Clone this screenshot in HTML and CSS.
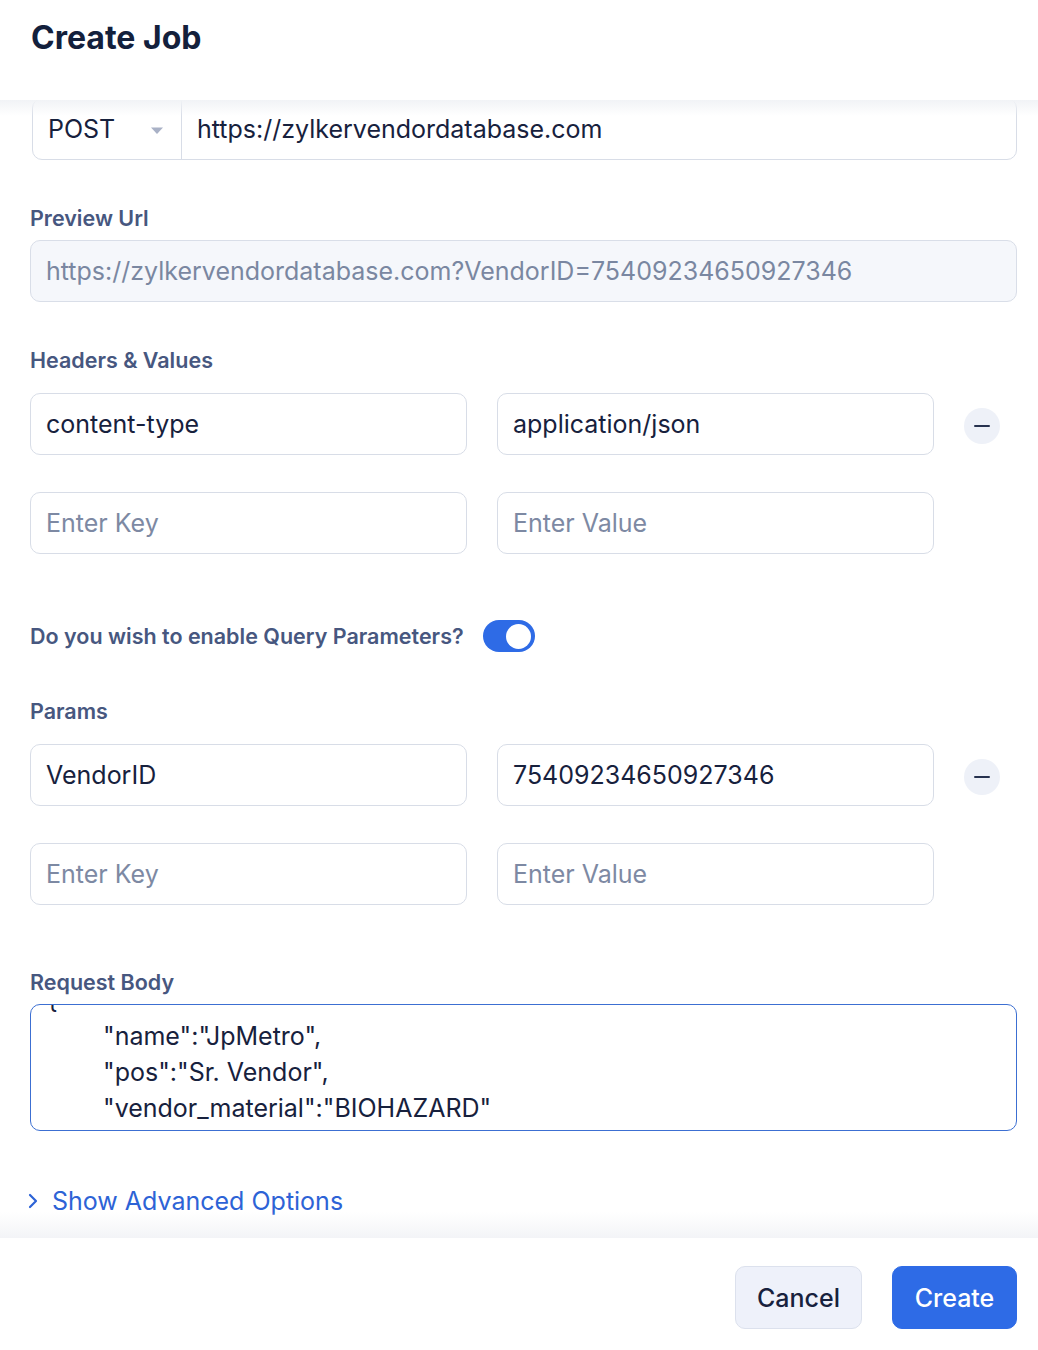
FILE: index.html
```html
<!DOCTYPE html>
<html lang="en">
<head>
<meta charset="utf-8">
<title>Create Job</title>
<link rel="stylesheet" href="styles.css">
</head>
<body>
<div class="modal">
  <header class="modal-head">
    <h1 class="title">Create Job</h1>
  </header>
  <main class="modal-body">
    <div class="scroll">
      <div class="url-row">
        <div class="method">
          <span>POST</span>
          <svg class="caret" width="14" height="9" viewBox="0 0 14 9"><path d="M1 1.5h12L7 8z" fill="#a9b1c6"/></svg>
        </div>
        <div class="url">https://zylkervendordatabase.com</div>
      </div>

      <div class="label l-preview">Preview Url</div>
      <div class="preview">https://zylkervendordatabase.com?VendorID=75409234650927346</div>

      <div class="label l-section">Headers &amp; Values</div>
      <div class="kv">
        <div class="field">content-type</div>
        <div class="field">application/json</div>
        <button class="remove" aria-label="Remove"><span></span></button>
      </div>
      <div class="kv kv-next">
        <div class="field ph">Enter Key</div>
        <div class="field ph">Enter Value</div>
        <div></div>
      </div>

      <div class="toggle-row">
        <span class="label">Do you wish to enable Query Parameters?</span>
        <span class="toggle"><span class="knob"></span></span>
      </div>

      <div class="label l-params">Params</div>
      <div class="kv">
        <div class="field">VendorID</div>
        <div class="field">75409234650927346</div>
        <button class="remove" aria-label="Remove"><span></span></button>
      </div>
      <div class="kv kv-next">
        <div class="field ph">Enter Key</div>
        <div class="field ph">Enter Value</div>
        <div></div>
      </div>

      <div class="label l-body">Request Body</div>
      <div class="textarea">
        <pre class="code">{
	"name":"JpMetro",
	"pos":"Sr. Vendor",
	"vendor_material":"BIOHAZARD"
}</pre>
      </div>

      <div class="advanced">
        <svg width="12" height="16" viewBox="0 0 12 16"><path d="M3 2l6 6-6 6" fill="none" stroke="#2d63d6" stroke-width="2.2" stroke-linecap="round" stroke-linejoin="round"/></svg>
        <span>Show Advanced Options</span>
      </div>
    </div>
  </main>
  <footer class="modal-foot">
    <button class="btn btn-cancel">Cancel</button>
    <button class="btn btn-create">Create</button>
  </footer>
</div>
</body>
</html>
```

FILE: styles.css
```css
* { box-sizing: border-box; }
html, body { margin: 0; padding: 0; background: #fff; }
body {
  font-family: Inter, "Noto Sans", "Liberation Sans", sans-serif;
  color: #17213d;
  width: 1038px;
  height: 1350px;
  overflow: hidden;
}
.modal { display: flex; flex-direction: column; height: 1350px; }

.modal-head { height: 100px; padding: 18px 31px 0; flex: none; }
.title {
  margin: 0;
  font-size: 32px;
  line-height: 40px;
  font-weight: 700;
  color: #13203c;
}

.modal-body {
  position: relative;
  height: 1138px;
  flex: none;
  overflow: hidden;
}
.modal-body::before,
.modal-body::after {
  content: "";
  position: absolute;
  left: 0; right: 0;
  z-index: 2;
  pointer-events: none;
}
.modal-body::before { top: 0; height: 16px; background: linear-gradient(#f1f3f6, rgba(255,255,255,0)); }
.modal-body::after { bottom: 0; height: 26px; background: linear-gradient(rgba(255,255,255,0), #f3f4f7); }

.scroll { padding: 0 21px 0 30px; margin-top: -2px; }

.url-row {
  display: flex;
  height: 62px;
  margin-left: 2px;
  border: 1px solid #d8dde7;
  border-radius: 10px;
  background: #fff;
}
.method {
  width: 149px;
  flex: none;
  display: flex;
  align-items: center;
  justify-content: space-between;
  padding: 0 17px 0 15px;
  border-right: 1px solid #d8dde7;
  font-size: 25px;
  color: #17213d;
}
.caret { margin-top: 2px; }
.url {
  flex: 1;
  display: flex;
  align-items: center;
  padding-left: 15px;
  font-size: 25px;
  color: #17213d;
}

.label {
  font-size: 21.5px;
  line-height: 26px;
  font-weight: 600;
  color: #47577f;
}
.l-preview { margin-top: 45px; }
.l-section { margin-top: 45px; }
.l-params { margin-top: 46px; }
.l-body { margin-top: 64px; }

.preview {
  margin-top: 9px;
  height: 62px;
  display: flex;
  align-items: center;
  padding-left: 15px;
  background: #f5f7fb;
  border: 1px solid #d9dee8;
  border-radius: 10px;
  font-size: 25px;
  color: #7a87a1;
}

.kv {
  display: grid;
  grid-template-columns: 1fr 1fr 53px;
  column-gap: 30px;
  align-items: center;
  margin-top: 20px;
}
.kv-next { margin-top: 37px; }
.field {
  height: 62px;
  display: flex;
  align-items: center;
  padding-left: 15px;
  border: 1px solid #d8dde7;
  border-radius: 10px;
  background: #fff;
  font-size: 25px;
  color: #17213d;
}
.field.ph { color: #7d89a3; }

.remove {
  width: 36px;
  height: 36px;
  padding: 0;
  border: none;
  border-radius: 50%;
  background: #eef1f8;
  display: flex;
  align-items: center;
  justify-content: center;
  margin-top: 4px;
}
.remove span { display: block; width: 16px; height: 2px; background: #27324f; border-radius: 1px; }

.toggle-row {
  display: flex;
  align-items: center;
  gap: 19px;
  margin-top: 66px;
}
.toggle {
  width: 52px;
  height: 32px;
  border-radius: 16px;
  background: #2e6be6;
  display: flex;
  align-items: center;
  justify-content: flex-end;
  padding-right: 4px;
}
.knob { width: 25px; height: 25px; border-radius: 50%; background: #fff; }

.textarea {
  margin-top: 9px;
  height: 127px;
  border: 1px solid #3c6fd2;
  border-radius: 10px;
  overflow: hidden;
  padding-left: 16px;
}
.code {
  margin: -23px 0 0;
  font-family: Inter, "Noto Sans", "Liberation Sans", sans-serif;
  font-size: 25px;
  line-height: 36px;
  color: #17213d;
  tab-size: 56px;
  -moz-tab-size: 56px;
  white-space: pre;
}

.advanced {
  display: flex;
  align-items: center;
  gap: 13px;
  margin-top: 57px;
  font-size: 25px;
  line-height: 26px;
  color: #2d63d6;
}
.advanced svg { margin-left: -3px; }

.modal-foot {
  flex: 1;
  display: flex;
  justify-content: flex-end;
  align-items: flex-start;
  gap: 30px;
  padding: 28px 21px 0 0;
}
.btn {
  height: 63px;
  border-radius: 10px;
  font-family: Inter, "Noto Sans", "Liberation Sans", sans-serif;
  font-size: 25px;
  font-weight: 500;
  padding: 0;
}
.btn-cancel {
  width: 127px;
  background: #eef1fa;
  border: 1px solid #dce1ed;
  color: #17213d;
}
.btn-create {
  width: 125px;
  background: #2e6be6;
  border: 1px solid #2e6be6;
  color: #fff;
}
```
